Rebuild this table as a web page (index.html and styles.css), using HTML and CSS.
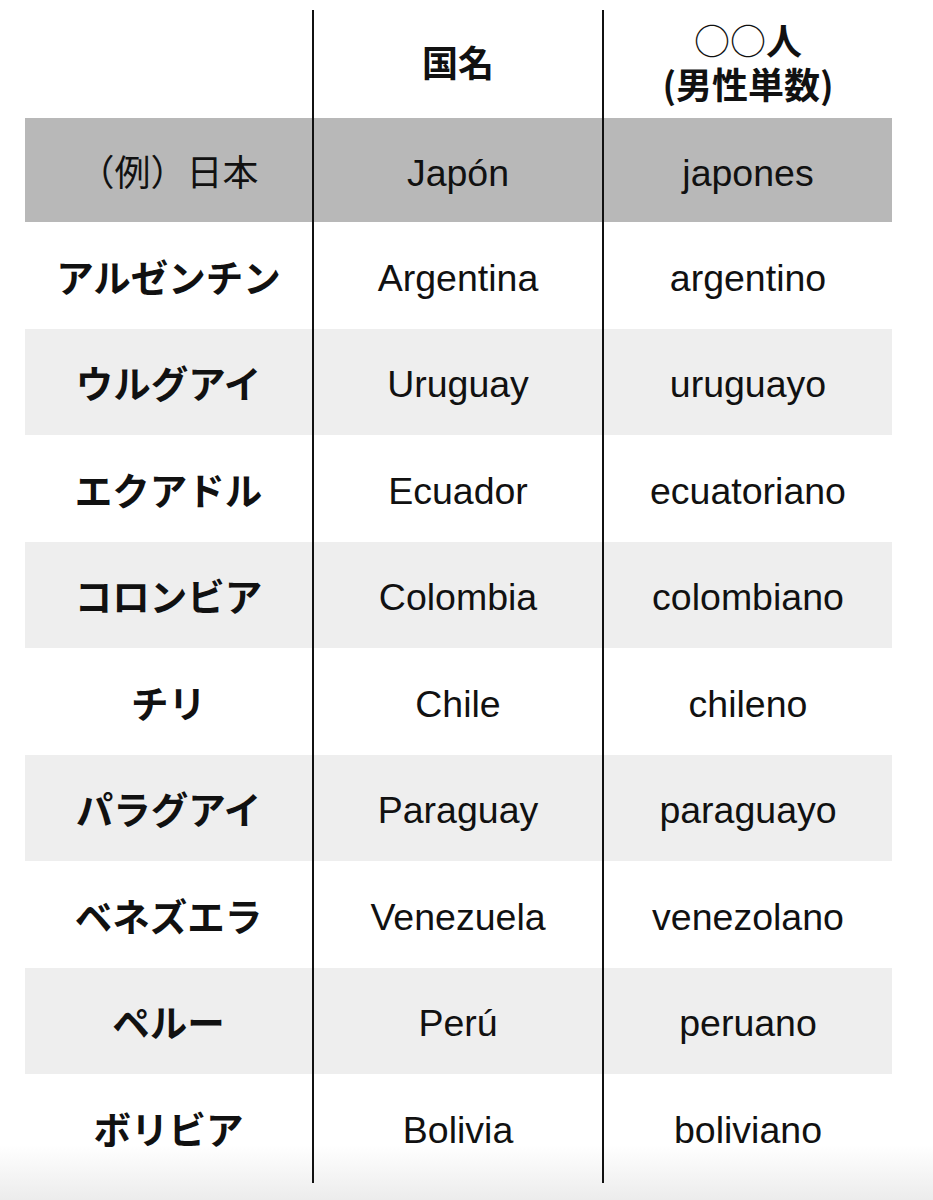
FILE: index.html
```html
<!DOCTYPE html>
<html lang="ja">
<head>
<meta charset="utf-8">
<title>国名と○○人</title>
<link rel="stylesheet" href="styles.css">
</head>
<body>
<div class="sheet">
  <div class="row head">
    <div class="cell c1"></div>
    <div class="cell c2 hd">国名</div>
    <div class="cell c3 hd two"><span class="ln"><span class="circ">○○</span>人</span><span class="ln">(男性単数)</span></div>
  </div>
  <div class="row example">
    <div class="cell c1 ex">（例）日本</div>
    <div class="cell c2 lat">Japón</div>
    <div class="cell c3 lat">japones</div>
  </div>
  <div class="row">
    <div class="cell c1 jp">アルゼンチン</div>
    <div class="cell c2 lat">Argentina</div>
    <div class="cell c3 lat">argentino</div>
  </div>
  <div class="row alt">
    <div class="cell c1 jp">ウルグアイ</div>
    <div class="cell c2 lat">Uruguay</div>
    <div class="cell c3 lat">uruguayo</div>
  </div>
  <div class="row">
    <div class="cell c1 jp">エクアドル</div>
    <div class="cell c2 lat">Ecuador</div>
    <div class="cell c3 lat">ecuatoriano</div>
  </div>
  <div class="row alt">
    <div class="cell c1 jp">コロンビア</div>
    <div class="cell c2 lat">Colombia</div>
    <div class="cell c3 lat">colombiano</div>
  </div>
  <div class="row">
    <div class="cell c1 jp">チリ</div>
    <div class="cell c2 lat">Chile</div>
    <div class="cell c3 lat">chileno</div>
  </div>
  <div class="row alt">
    <div class="cell c1 jp">パラグアイ</div>
    <div class="cell c2 lat">Paraguay</div>
    <div class="cell c3 lat">paraguayo</div>
  </div>
  <div class="row">
    <div class="cell c1 jp">ベネズエラ</div>
    <div class="cell c2 lat">Venezuela</div>
    <div class="cell c3 lat">venezolano</div>
  </div>
  <div class="row alt">
    <div class="cell c1 jp">ペルー</div>
    <div class="cell c2 lat">Perú</div>
    <div class="cell c3 lat">peruano</div>
  </div>
  <div class="row">
    <div class="cell c1 jp">ボリビア</div>
    <div class="cell c2 lat">Bolivia</div>
    <div class="cell c3 lat">boliviano</div>
  </div>
  <div class="row tail">
    <div class="cell c1"></div>
    <div class="cell c2"></div>
    <div class="cell c3"></div>
  </div>
</div>
</body>
</html>
```

FILE: styles.css
```css
html {
  height: 1200px;
  background: linear-gradient(to bottom, #ffffff 0, #ffffff 1145px, #ececec 1200px);
}

body {
  margin: 0;
  color: #111;
  font-family: "Liberation Sans", "Noto Sans CJK JP", sans-serif;
}

.sheet {
  margin: 10px 0 0 25px;
  width: 867px;
}

.row {
  display: grid;
  grid-template-columns: 287px 292px 288px;
  height: 106.5px;
}

.row.head {
  height: 108px;
}

.row.example {
  height: 104px;
  background: #b8b8b8;
}

.row.alt {
  background: #eeeeee;
}

.row.tail {
  height: 2px;
}

.cell {
  box-sizing: border-box;
  display: flex;
  align-items: center;
  justify-content: center;
  white-space: nowrap;
}

.c2 {
  border-left: 2px solid #111;
  border-right: 2px solid #111;
}

.hd {
  font-family: "Noto Sans CJK JP", sans-serif;
  font-weight: 700;
  font-size: 36px;
  padding-bottom: 6px;
}

.two {
  flex-direction: column;
  line-height: 44px;
}

.ln {
  display: block;
  height: 44px;
  line-height: 44px;
}

.circ {
  display: inline-block;
  height: 44px;
  line-height: 44px;
  vertical-align: top;
  font-weight: 400;
}

.jp {
  font-family: "Noto Sans CJK JP", sans-serif;
  font-weight: 700;
  font-size: 37.5px;
}

.ex {
  font-family: "Noto Sans CJK JP", sans-serif;
  font-weight: 400;
  font-size: 36px;
}

.lat {
  font-family: "Liberation Sans", Arial, sans-serif;
  font-size: 37.5px;
  padding-top: 6px;
}
```
